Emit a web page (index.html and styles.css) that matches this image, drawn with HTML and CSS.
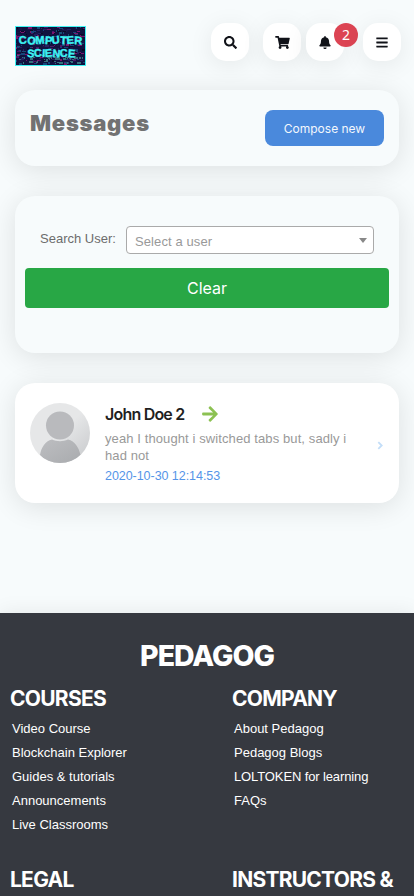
FILE: index.html
```html
<!DOCTYPE html>
<html lang="en">
<head>
<meta charset="utf-8">
<title>Messages</title>
<link rel="stylesheet" href="styles.css">
</head>
<body>
<header class="topbar">
  <svg class="logo" id="logo" viewBox="0 0 71 40" role="img" aria-label="Computer Science">
    <rect width="71" height="40" fill="#10123f"/>
    <g id="noise"></g>
    <text class="logo-text" x="4" y="18" rotate="-4 5 -3 4 -5 3 -4 5" textLength="63" lengthAdjust="spacingAndGlyphs">COMPUTER</text>
    <text class="logo-text" x="12" y="31" rotate="4 -5 3 -4 5 -3 4" textLength="48" lengthAdjust="spacingAndGlyphs">SCIENCE</text>
    <rect x=".5" y=".5" width="70" height="39" fill="none" stroke="#3ef4f4"/>
  </svg>
  <nav class="actions">
    <a class="round search"><svg viewBox="0 0 512 512" width="13" height="13"><path d="M505 442.700L405.300 343c-4.500-4.500-10.600-7-17-7H372c27.600-35.300 44-79.700 44-128C416 93.100 322.900 0 208 0S0 93.100 0 208s93.100 208 208 208c48.300 0 92.700-16.400 128-44v16.300c0 6.400 2.500 12.500 7 17l99.700 99.700c9.400 9.400 24.600 9.400 33.900 0l28.300-28.300c9.400-9.400 9.400-24.600.100-34zM208 336c-70.700 0-128-57.200-128-128 0-70.700 57.200-128 128-128 70.700 0 128 57.200 128 128 0 70.700-57.200 128-128 128z"/></svg></a>
    <a class="round cart"><svg viewBox="0 0 576 512" width="15" height="13"><path d="M528.120 301.319l47.273-208C578.806 78.301 567.391 64 551.990 64H159.208l-9.166-44.810C147.758 8.021 137.930 0 126.529 0H24C10.745 0 0 10.745 0 24v16c0 13.255 10.745 24 24 24h69.883l70.248 343.435C147.325 417.100 136 435.222 136 456c0 30.928 25.072 56 56 56s56-25.072 56-56c0-15.674-6.447-29.835-16.824-40h209.647C430.447 426.165 424 440.326 424 456c0 30.928 25.072 56 56 56s56-25.072 56-56c0-22.172-12.888-41.332-31.579-50.405l5.517-24.276c3.413-15.018-8.002-29.319-23.403-29.319H218.117l-6.545-32h293.145c11.206 0 20.920-7.754 23.403-18.681z"/></svg></a>
    <a class="round bell"><svg viewBox="0 0 448 512" width="12" height="13"><path d="M224 512c35.320 0 63.970-28.650 63.970-64H160.030c0 35.350 28.650 64 63.970 64zm215.390-149.710c-19.320-20.760-55.470-51.990-55.470-154.290 0-77.700-54.480-139.900-127.940-155.160V32c0-17.670-14.320-32-31.980-32s-31.980 14.330-31.980 32v20.840C118.560 68.100 64.080 130.300 64.080 208c0 102.300-36.150 133.530-55.470 154.290-6 6.450-8.660 14.160-8.610 21.710.110 16.400 12.980 32 32.100 32h383.800c19.120 0 32-15.600 32.100-32 .050-7.550-2.610-15.270-8.610-21.710z"/></svg><span class="badge">2</span></a>
    <a class="round menu"><svg viewBox="0 0 448 512" width="12" height="13"><path d="M16 132h416c8.837 0 16-7.163 16-16V76c0-8.837-7.163-16-16-16H16C7.163 60 0 67.163 0 76v40c0 8.837 7.163 16 16 16zm0 160h416c8.837 0 16-7.163 16-16v-40c0-8.837-7.163-16-16-16H16c-8.837 0-16 7.163-16 16v40c0 8.837 7.163 16 16 16zm0 160h416c8.837 0 16-7.163 16-16v-40c0-8.837-7.163-16-16-16H16c-8.837 0-16 7.163-16 16v40c0 8.837 7.163 16 16 16z"/></svg></a>
  </nav>
</header>
<main class="content">
  <section class="card title-card">
    <h1>Messages</h1>
    <a class="compose">Compose new</a>
  </section>
  <section class="card search-card">
    <div class="field"><span class="label">Search User:</span><div class="select"><span>Select a user</span><i class="caret"></i></div></div>
    <button class="clear">Clear</button>
  </section>
  <section class="card message">
    <svg class="avatar" viewBox="0 0 60 60">
      <defs>
        <linearGradient id="bg" x1="0" y1="0" x2="1" y2="1"><stop offset=".5" stop-color="#e6e7e8"/><stop offset="1" stop-color="#c6c8ca"/></linearGradient>
        <linearGradient id="fg" x1="0" y1="0" x2="1" y2="1"><stop offset="0" stop-color="#bdbec1"/><stop offset="1" stop-color="#a9abae"/></linearGradient>
        <clipPath id="round"><circle cx="30" cy="30" r="30"/></clipPath>
      </defs>
      <g clip-path="url(#round)"><rect width="60" height="60" fill="url(#bg)"/><circle cx="30" cy="22.500" r="14" fill="#b9babd"/><path d="M10 52c1-7 5-14 12-15.500 5 2.200 11 2.200 16 0 7 1.500 11 8.500 12.500 15.500L42 60H18z" fill="url(#fg)"/></g>
    </svg>
    <div class="body">
      <h2>John Doe 2<svg class="arrow" viewBox="0 0 448 512" width="16" height="18"><path d="M190.500 66.900l22.200-22.200c9.400-9.400 24.600-9.400 33.900 0L441 239c9.400 9.400 9.400 24.600 0 33.900L246.600 467.300c-9.400 9.400-24.600 9.400-33.900 0l-22.200-22.200c-9.500-9.500-9.300-25 .400-34.300L311.400 296H24c-13.300 0-24-10.700-24-24v-32c0-13.300 10.700-24 24-24h287.400L190.900 101.200c-9.800-9.300-10-24.800-.400-34.300z"/></svg></h2>
      <p>yeah I thought i switched tabs but, sadly i had not</p>
      <time>2020-10-30 12:14:53</time>
    </div>
    <svg class="chevron" viewBox="0 0 5 8" width="6" height="9"><path d="M1 1l3 3-3 3" fill="none" stroke="#c3def8" stroke-width="1.600"/></svg>
  </section>
</main>
<footer class="footer">
  <h2 class="brand">PEDAGOG</h2>
  <div class="columns">
    <section><h3>COURSES</h3><ul><li>Video Course</li><li>Blockchain Explorer</li><li>Guides &amp; tutorials</li><li>Announcements</li><li>Live Classrooms</li></ul></section>
    <section><h3>COMPANY</h3><ul><li>About Pedagog</li><li>Pedagog Blogs</li><li class="tight">LOLTOKEN for learning</li><li>FAQs</li></ul></section>
    <section><h3>LEGAL</h3></section>
    <section><h3>INSTRUCTORS &amp;</h3></section>
  </div>
</footer>
<script src="logo.js"></script>
</body>
</html>
```
FILE: styles.css
```css
* { box-sizing: border-box; }
html, body { height: 896px; overflow: hidden; }
body { margin: 0; background: #f7fbfc; font: 13px/17px "Liberation Sans", Arial, sans-serif; color: #6c6c6c; display: flex; flex-direction: column; }
h1, h2, h3, p, ul { margin: 0; padding: 0; }
.topbar { display: flex; justify-content: space-between; padding: 23px 13px 0 15px; height: 90px; }
.logo { width: 71px; height: 40px; margin-top: 3px; }
.logo-text { font: bold 11px "Liberation Sans", sans-serif; fill: #3ef4f4; stroke: #3ef4f4; stroke-width: .4px; }
.actions { display: flex; }
.round { position: relative; width: 38px; height: 38px; border-radius: 15px; background: #fff; display: flex; align-items: center; justify-content: center; box-shadow: 0 4px 24px rgba(0, 0, 0, .08); }
.round svg { fill: #101218; }
.cart { margin-left: 14px; }
.bell { margin-left: 5px; }
.menu { margin-left: 19px; }
.badge { position: absolute; left: 28px; top: 0; width: 24px; height: 24px; border-radius: 12px; background: #dc4453; color: #fff; font: 14px/24px "Noto Sans", sans-serif; text-align: center; }
.content { padding: 0 15px; height: 523px; flex: none; }
.card { border-radius: 20px; background: #f7fbfc; box-shadow: 0 4px 28px rgba(0, 0, 0, .11); }
.title-card { height: 76px; padding: 20px 15px; display: flex; justify-content: space-between; }
h1 { font: 900 22px/27px Inter, sans-serif; letter-spacing: .75px; color: #727272; }
.compose { width: 119px; height: 36px; border-radius: 8px; background: #4a89dc; color: #f3f7fc; font: 12px/37px Inter, sans-serif; letter-spacing: 0; text-align: center; }
.search-card { height: 157px; margin-top: 30px; padding: 30px 10px; }
.field { display: flex; padding: 0 15px; height: 28px; }
.label { width: 86px; padding-top: 4px; }
.select { flex: 1; height: 28px; border: 1px solid #aaa; border-radius: 4px; background: #fff; color: #999; padding: 0 6px 0 8px; display: flex; justify-content: space-between; align-items: center; }
.select span { padding-top: 3px; letter-spacing: .1px; }
.caret { border: 4px solid transparent; border-top: 5px solid #888; border-bottom: 0; }
.clear { display: block; width: 100%; height: 40px; margin-top: 14px; border: 0; border-radius: 4px; background: #28a745; color: #fff; font: 16px/24px Inter, sans-serif; padding: 0 0 1px; }
.message { height: 120px; margin-top: 30px; padding: 20px 15px; background: #fff; display: flex; }
.avatar { width: 60px; height: 60px; margin-right: 15px; flex: none; }
.body { width: 258px; }
.message h2 { font: 600 16px/22px Inter, sans-serif; letter-spacing: -.8px; color: #1f1f1f; display: flex; align-items: center; }
.arrow { margin-left: 17.500px; fill: #8cc152; }
.message p { color: #999; margin-top: 5px; letter-spacing: .1px; }
.message time { display: block; color: #5595e8; margin-top: 4px; font-size: 12.500px; letter-spacing: -.05px; }
.chevron { margin: 38px 0 0 14px; }
.footer { flex: none; height: 283px; background: #363940; color: #fff; box-shadow: 0 0 20px rgba(0, 0, 0, .08); padding: 26px 10px 0; overflow: clip; overflow-clip-margin: 24px; }
.brand { font: 800 28.500px/34px Inter, sans-serif; letter-spacing: -1px; text-align: center; }
.columns { display: grid; grid-template-columns: 222px 1fr; row-gap: 29px; margin-top: 12px; }
.columns h3 { font: 700 21px/28px Inter, sans-serif; letter-spacing: -.75px; white-space: nowrap; }
.columns ul { list-style: none; padding: 4px 0 0 2px; line-height: 24px; }
.columns .tight { letter-spacing: -.12px; }
```
FILE: logo.js
```js
// Pixel skyline behind the logo lettering
const colors = ['#7c146d', '#252061', '#174d76', '#080b25', '#4d1768', '#16467a', '#191448', '#10123f', '#10123f'];
const noise = document.getElementById('noise');
let seed = 17;
const next = () => (seed = (seed * 16807) % 2147483647) / 2147483647;
for (let i = 0; i < 420; i++) {
  const r = document.createElementNS('http://www.w3.org/2000/svg', 'rect');
  const x = 1 + Math.floor(next() * 68), y = 1 + Math.floor(next() * 37);
  r.setAttribute('x', x);
  r.setAttribute('y', y);
  r.setAttribute('width', 1 + Math.floor(next() * 4));
  r.setAttribute('height', 1 + Math.floor(next() * 2));
  r.setAttribute('fill', y > 28 && next() > .7 ? '#36717d' : colors[Math.floor(next() * colors.length)]);
  noise.appendChild(r);
}
```
